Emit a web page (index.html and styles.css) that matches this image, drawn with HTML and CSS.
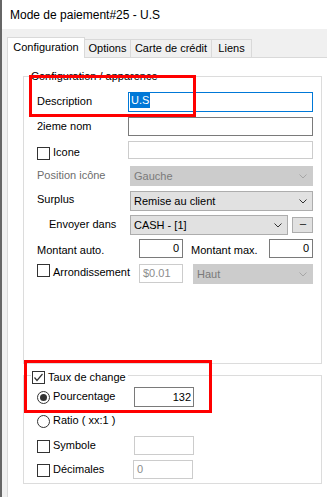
FILE: index.html
```html
<!DOCTYPE html>
<html lang="fr">
<head>
<meta charset="utf-8">
<title>Mode de paiement#25 - U.S</title>
<link rel="stylesheet" href="styles.css">
</head>
<body>
<div class="window">
  <div class="titlebar">Mode de paiement#25 - U.S</div>
  <div class="tabs">
    <div class="tab active">Configuration</div>
    <div class="tab t-options">Options</div>
    <div class="tab t-carte">Carte de crédit</div>
    <div class="tab t-liens">Liens</div>
  </div>
  <div class="page">
    <div class="group g1">
      <div class="legend">Configuration / apparence</div>

      <div class="row">
        <span class="lbl mt3">Description</span>
        <div class="tb focus w185 push"><span class="sel">U.S</span></div>
      </div>

      <div class="row short">
        <span class="lbl mt3">2ieme nom</span>
        <div class="tb w185 push"></div>
      </div>

      <div class="row">
        <span class="chk mt6"></span>
        <span class="lbl mt5 ml3">Icone</span>
        <div class="tb dis h18 w185 push"></div>
      </div>

      <div class="row">
        <span class="lbl mt3 grey">Position icône</span>
        <div class="cb dis w183 push"><span>Gauche</span><svg class="chev" width="8" height="5" viewBox="0 0 8 5"><polyline points="0.5,0.5 4,4 7.5,0.5" fill="none" stroke="#a6a6a6" stroke-width="1"/></svg></div>
      </div>

      <div class="row short">
        <span class="lbl mt2">Surplus</span>
        <div class="cb w183 push"><span>Remise au client</span><svg class="chev" width="8" height="5" viewBox="0 0 8 5"><polyline points="0.5,0.5 4,4 7.5,0.5" fill="none" stroke="#333" stroke-width="1"/></svg></div>
      </div>

      <div class="row short">
        <span class="lbl mt3 indent">Envoyer dans</span>
        <div class="cb w158 push"><span>CASH - [1]</span><svg class="chev" width="8" height="5" viewBox="0 0 8 5"><polyline points="0.5,0.5 4,4 7.5,0.5" fill="none" stroke="#333" stroke-width="1"/></svg></div>
        <div class="btn mt2">---</div>
      </div>

      <div class="row">
        <span class="lbl mt5 w102">Montant auto.</span>
        <div class="tb num w44">0</div>
        <span class="lbl mt5 ml8 w78">Montant max.</span>
        <div class="tb num w44">0</div>
      </div>

      <div class="row last">
        <span class="chk"></span>
        <span class="lbl mt2 ml3 w86">Arrondissement</span>
        <div class="tb dis w44">$0.01</div>
        <div class="cb dis h20 w120 ml10"><span>Haut</span><svg class="chev" width="8" height="5" viewBox="0 0 8 5"><polyline points="0.5,0.5 4,4 7.5,0.5" fill="none" stroke="#a6a6a6" stroke-width="1"/></svg></div>
      </div>
    </div>

    <div class="group g2">
      <div class="legend legend-check">
        <span class="chk"><svg width="11" height="11" viewBox="0 0 11 11"><polyline points="1.5,5.5 4,8.5 9.5,2" fill="none" stroke="#333" stroke-width="1.2"/></svg></span>
        <span class="lbl">Taux de change</span>
      </div>

      <div class="row">
        <span class="rad on mt4"></span>
        <span class="lbl mt3 ml3 w81">Pourcentage</span>
        <div class="tb num h20 w60 pr2">132</div>
      </div>

      <div class="row short">
        <span class="rad mt3"></span>
        <span class="lbl mt2 ml3">Ratio ( xx:1 )</span>
      </div>

      <div class="row short">
        <span class="chk mt4"></span>
        <span class="lbl mt3 ml3 w81">Symbole</span>
        <div class="tb dis w60"></div>
      </div>

      <div class="row last">
        <span class="chk mt4"></span>
        <span class="lbl mt3 ml3 w80">Décimales</span>
        <div class="tb dis w60">0</div>
      </div>
    </div>
  </div>
</div>
<div class="mark mark1"></div>
<div class="mark mark2"></div>
</body>
</html>
```

FILE: styles.css
```css
html, body {
  margin: 0;
  padding: 0;
}
body {
  width: 327px;
  height: 497px;
  overflow: hidden;
  background: #f0f0f0;
  font-family: "Liberation Sans", Arial, sans-serif;
  font-size: 11px;
  color: #000;
  position: relative;
}
.window {
  display: flex;
  flex-direction: column;
  height: 497px;
  box-sizing: border-box;
  border-left: 2px solid #666;
}
.titlebar {
  flex: none;
  height: 29px;
  background: #fff;
  padding-left: 8px;
  font-size: 12px;
  line-height: 30px;
  white-space: nowrap;
}
.tabs {
  flex: none;
  height: 28px;
  display: flex;
  align-items: flex-end;
  padding-left: 5px;
}
.tab {
  box-sizing: border-box;
  height: 18px;
  border: 1px solid #d9d9d9;
  border-bottom: none;
  text-align: center;
  line-height: 17px;
  margin-left: -1px;
  white-space: nowrap;
}
.tab.active {
  width: 78px;
  height: 21px;
  margin-left: 0;
  margin-bottom: -1px;
  background: #fff;
  line-height: 18px;
  position: relative;
  z-index: 1;
}
.t-options { width: 47px; }
.t-carte { width: 82px; }
.t-liens { width: 41px; }

.page {
  flex: 1;
  background: #fff;
  border-top: 1px solid #d9d9d9;
  border-left: 1px solid #d9d9d9;
  margin-left: 5px;
  display: flex;
  flex-direction: column;
  align-items: flex-start;
}
.group {
  position: relative;
  box-sizing: border-box;
  width: 299px;
  margin-left: 15px;
  border: 1px solid #dcdcdc;
  padding: 0 8px 0 13px;
}
.g1 {
  margin-top: 18px;
  height: 288px;
  padding-top: 15px;
}
.g2 {
  margin-top: 11px;
  height: 109px;
  padding-top: 11px;
}
.legend {
  position: absolute;
  top: -7px;
  left: 6px;
  background: #fff;
  padding: 0 1px;
  line-height: 13px;
  white-space: nowrap;
}
.legend-check {
  top: -5px;
  left: 7px;
  padding: 0 2px 0 1px;
  display: flex;
  align-items: flex-start;
  gap: 3px;
}

.row {
  display: flex;
  align-items: flex-start;
  height: 25px;
}
.row.short { height: 24px; }
.row.last { height: 20px; }

.lbl {
  flex: none;
  line-height: 13px;
  white-space: nowrap;
}
.grey { color: #6d6d6d; }
.indent { padding-left: 12px; }

.push { margin-left: auto; }
.mt2 { margin-top: 2px; }
.mt3 { margin-top: 3px; }
.mt4 { margin-top: 4px; }
.mt5 { margin-top: 5px; }
.mt6 { margin-top: 6px; }
.ml3 { margin-left: 3px; }
.ml8 { margin-left: 8px; }
.ml10 { margin-left: 10px; }
.w44 { width: 44px; }
.w60 { width: 60px; }
.w78 { width: 78px; }
.w80 { width: 80px; }
.w81 { width: 81px; }
.w86 { width: 86px; }
.w102 { width: 102px; }
.w120 { width: 120px; }
.w158 { width: 158px; }
.w183 { width: 183px; }
.w185 { width: 185px; }

.tb {
  flex: none;
  box-sizing: border-box;
  height: 19px;
  border: 1px solid #7a7a7a;
  background: #fff;
  line-height: 17px;
  padding: 0 3px;
  white-space: nowrap;
  overflow: hidden;
}
.tb.h18 { height: 18px; line-height: 16px; }
.tb.h20 { height: 20px; line-height: 18px; }
.tb.focus {
  height: 20px;
  border-color: #0078d7;
  padding: 0 0 0 1px;
  line-height: 15px;
}
.tb.dis {
  border-color: #cccccc;
  color: #8c8c8c;
}
.tb.num { text-align: right; }
.tb.pr2 { padding-right: 2px; }
.sel {
  display: inline-block;
  background: #0078d7;
  color: #fff;
  padding: 0 1px;
  line-height: 15px;
}

.cb {
  flex: none;
  box-sizing: border-box;
  height: 20px;
  border: 1px solid #adadad;
  background: #e1e1e1;
  display: flex;
  align-items: center;
  justify-content: space-between;
  padding: 0 5px 0 3px;
  white-space: nowrap;
}
.cb.dis {
  background: #cccccc;
  border-color: #cccccc;
  color: #7a7a7a;
}
.chev { display: block; flex: none; }

.btn {
  flex: none;
  box-sizing: border-box;
  width: 21px;
  height: 16px;
  margin-left: 4px;
  border: 1px solid #adadad;
  background: #e1e1e1;
  font-size: 9px;
  letter-spacing: -1px;
  line-height: 13px;
  text-align: center;
}

.chk, .rad {
  flex: none;
  box-sizing: border-box;
  width: 13px;
  height: 13px;
  border: 1px solid #333;
  background: #fff;
}
.chk svg { display: block; }
.rad {
  border-radius: 50%;
  display: flex;
  align-items: center;
  justify-content: center;
}
.rad.on::after {
  content: "";
  width: 7px;
  height: 7px;
  border-radius: 50%;
  background: #333;
}

.mark {
  position: absolute;
  box-sizing: border-box;
  border: 3px solid #ff0000;
  pointer-events: none;
}
.mark1 {
  left: 29px;
  top: 75px;
  width: 167px;
  height: 42px;
}
.mark2 {
  left: 24px;
  top: 360px;
  width: 188px;
  height: 53px;
}
```
